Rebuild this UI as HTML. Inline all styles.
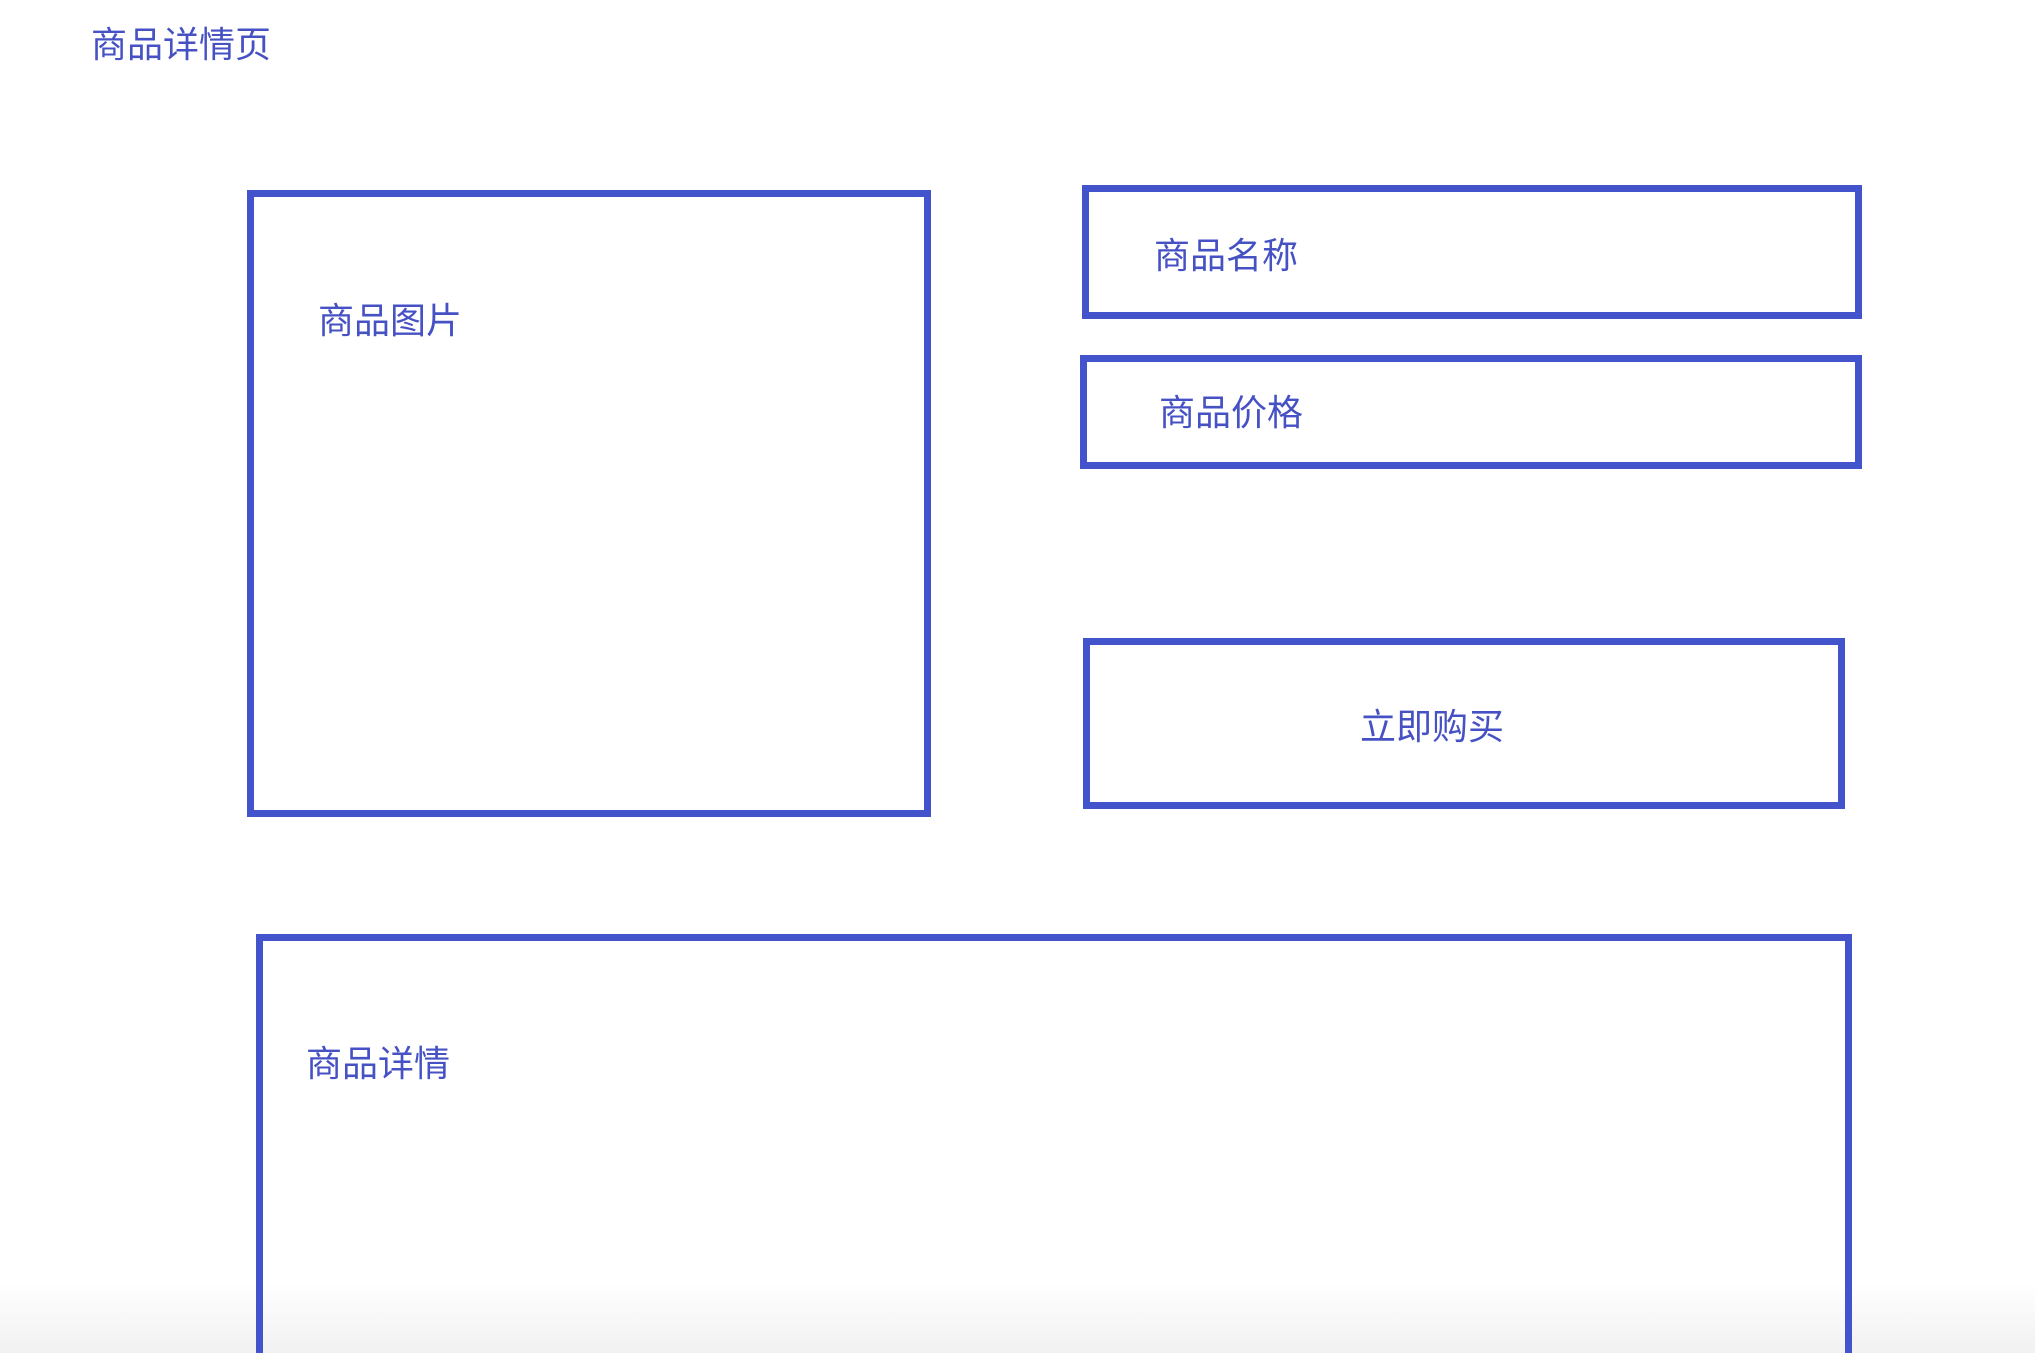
<!DOCTYPE html>
<html><head><meta charset="utf-8"><style>
html,body{margin:0;padding:0;width:2035px;height:1353px;overflow:hidden;background:#fff;}
#w{width:2035px;height:1353px;position:relative;overflow:hidden;background:#fff;
font-family:"Liberation Sans","Noto Sans CJK SC",sans-serif;color:#4651c4;}
.b{position:absolute;border:7px solid #4353cb;box-sizing:border-box;}
.t{position:absolute;font-size:36px;line-height:1;white-space:nowrap;}
.fade{position:absolute;left:0;right:0;bottom:0;height:70px;background:linear-gradient(#fff,#f1f1f1);}
</style></head><body><div id="w">
<div class="fade"></div>
<div class="t" style="left:91px;top:27px;">商品详情页</div>
<div class="b" style="left:247px;top:190px;width:684px;height:627px;"></div>
<div class="t" style="left:318px;top:303px;">商品图片</div>
<div class="b" style="left:1082px;top:185px;width:780px;height:134px;"></div>
<div class="t" style="left:1154px;top:238px;">商品名称</div>
<div class="b" style="left:1080px;top:355px;width:782px;height:114px;"></div>
<div class="t" style="left:1159px;top:395px;">商品价格</div>
<div class="b" style="left:1083px;top:638px;width:762px;height:171px;"></div>
<div class="t" style="left:1360px;top:709px;">立即购买</div>
<div class="b" style="left:256px;top:934px;width:1596px;height:480px;"></div>
<div class="t" style="left:306px;top:1046px;">商品详情</div>
</div></body></html>
